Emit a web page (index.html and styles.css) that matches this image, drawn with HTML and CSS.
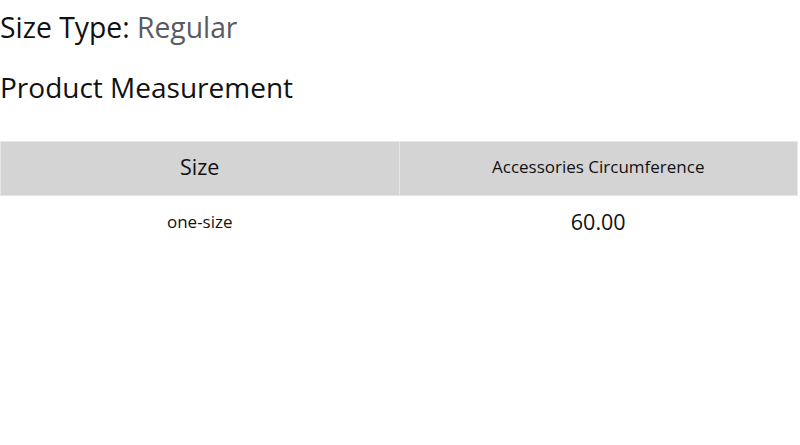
FILE: index.html
```html
<!DOCTYPE html>
<html>
<head>
<meta charset="utf-8">
<link rel="stylesheet" href="styles.css">
</head>
<body>
<div class="page">
  <div class="size-type">Size Type: <span class="value">Regular</span></div>
  <div class="title">Product Measurement</div>
  <table class="measure">
    <thead>
      <tr><th class="big">Size</th><th>Accessories Circumference</th></tr>
    </thead>
    <tbody>
      <tr><td>one-size</td><td class="big">60.00</td></tr>
    </tbody>
  </table>
</div>
</body>
</html>
```
FILE: styles.css
```css
html, body { margin: 0; padding: 0; background: #fff; }
body { font-family: "Open Sans", "Noto Sans", sans-serif; color: #111; }
.page { width: 798px; }
.size-type { font-size: 28.3px; line-height: 38px; padding-top: 8px; }
.size-type .value { color: #5a5a62; }
.title { font-size: 28px; line-height: 38px; margin-top: 22px; }
.measure { width: 100%; border-collapse: collapse; margin-top: 35px; table-layout: fixed; }
.measure th, .measure td { border: 1px solid #e6e6e6; text-align: center; font-weight: normal; font-size: 17px; padding: 0 0 4px; }
.measure th { background: #d4d4d4; height: 49px; }
.measure td { height: 50px; border-color: transparent; }
.measure .big { font-size: 21.5px; }
```
